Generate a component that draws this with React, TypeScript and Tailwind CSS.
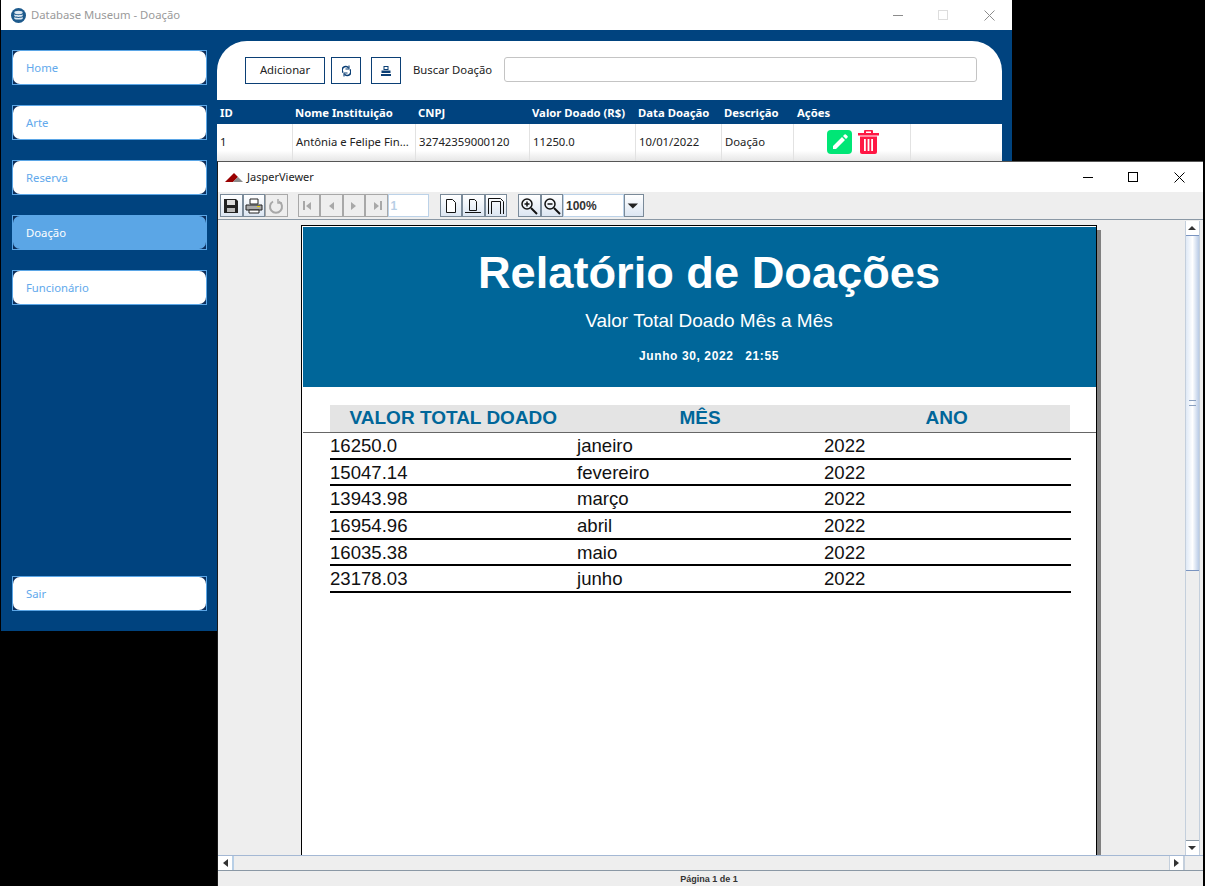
const NAV = ["Home", "Arte", "Reserva", "Doação", "Funcionário"];

const COLUMNS = [
  { label: "ID", value: "1", w: "w-[76px]" },
  { label: "Nome Instituição", value: "Antônia e Felipe Fin...", w: "w-[123px]" },
  { label: "CNPJ", value: "32742359000120", w: "w-[114px]" },
  { label: "Valor Doado (R$)", value: "11250.0", w: "w-[106px]" },
  { label: "Data Doação", value: "10/01/2022", w: "w-[86px]" },
  { label: "Descrição", value: "Doação", w: "w-[72px]" },
];

const ROWS = [
  ["16250.0", "janeiro", "2022"],
  ["15047.14", "fevereiro", "2022"],
  ["13943.98", "março", "2022"],
  ["16954.96", "abril", "2022"],
  ["16035.38", "maio", "2022"],
  ["23178.03", "junho", "2022"],
];

function NavButton({ label, active }: { label: string; active?: boolean }) {
  return (
    <div className="h-[35px] w-[195px] border border-[#5ba6e6] bg-[#0d2f5c]">
      <div
        className={`flex h-full items-center rounded-[7px] pl-[13px] pt-[1px] text-[11.300px] ${
          active ? "bg-[#5ba6e6] text-white" : "bg-white text-[#62a9ec]"
        }`}
      >
        {label}
      </div>
    </div>
  );
}

function ToolButton({ children, off }: { children: React.ReactNode; off?: boolean }) {
  return (
    <div
      className={`flex h-[23px] w-[22.500px] shrink-0 items-center justify-center border bg-gradient-to-b ${
        off ? "border-[#a8a8a8] from-[#eeeeee] to-[#eeeeee]" : "border-[#7a8a99] from-white to-[#dce6f2]"
      }`}
    >
      {children}
    </div>
  );
}

function Tri({ dir, className }: { dir: "l" | "r" | "u" | "d"; className: string }) {
  const pts = { l: "8,1 8,9 3,5", r: "3,1 3,9 8,5", u: "1,7 9,7 5,3", d: "1,3 9,3 5,7" }[dir];
  return (
    <svg width="11" height="10" viewBox="0 0 11 10" className={className}>
      <polygon points={pts} fill="currentColor" />
    </svg>
  );
}

// window buttons, drawn so the three glyphs keep the native 10px box
function WinControls({ minGap, maxGap, right, maxClass, className }: {
  minGap: string;
  maxGap: string;
  right: string;
  maxClass: string;
  className: string;
}) {
  return (
    <div className={`ml-auto flex items-center ${right} ${className}`}>
      <svg width="10" height="10" viewBox="0 0 10 10" stroke="currentColor" className={minGap}>
        <path d="M0 5.500h10" />
      </svg>
      <svg width="10" height="10" viewBox="0 0 10 10" fill="none" stroke="currentColor" className={`${maxGap} ${maxClass}`}>
        <rect x="0.500" y="0.500" width="9" height="9" />
      </svg>
      <svg width="11" height="11" viewBox="0 0 11 11" stroke="currentColor">
        <path d="M0.500 0.500l10 10M10.500 0.500l-10 10" />
      </svg>
    </div>
  );
}

export default function App() {
  return (
    <div className="relative h-[886px] w-[1205px] overflow-hidden bg-black font-['Noto_Sans',sans-serif]">
      {/* main window */}
      <div className="ml-px flex h-[631px] w-[1011px] flex-col bg-[#00437f]">
        <div className="flex h-[30px] shrink-0 items-center bg-white pl-[10px] text-[11.300px] text-[#9a9a9a]">
          <svg width="15" height="15" viewBox="0 0 15 15" className="mr-[5px]">
            <circle cx="7.500" cy="7.500" r="7.500" fill="#1d5a8c" />
            <ellipse cx="7.500" cy="4.500" rx="4.200" ry="1.800" fill="#dfe9f2" />
            <path d="M3.300 6.300c1.500 1.200 6.900 1.200 8.400 0v1.700c-1.500 1.200-6.900 1.200-8.400 0z" fill="#dfe9f2" />
            <path d="M3.300 9c1.500 1.200 6.900 1.200 8.400 0v1.700c-1.500 1.200-6.900 1.200-8.400 0z" fill="#dfe9f2" />
          </svg>
          <span>Database Museum - Doação</span>
          <WinControls
            minGap="mr-[35px]"
            maxGap="mr-[36px]"
            right="mr-[17px]"
            maxClass="text-[#dddddd]"
            className="text-[#8c8c8c]"
          />
        </div>

        <div className="flex flex-1">
          <div className="flex w-[216px] shrink-0 flex-col gap-[20px] pb-[20px] pl-[11px] pt-[20px]">
            {NAV.map((n) => (
              <NavButton key={n} label={n} active={n === "Doação"} />
            ))}
            <div className="mt-auto">
              <NavButton label="Sair" />
            </div>
          </div>

          <div className="mt-[11px] h-[130px] w-[785px] rounded-t-[30px] bg-white">
            <div className="flex h-[59px] items-start pl-[28px] pt-[16px] text-[11.300px] text-[#222222]">
              <div className="flex h-[27px] w-[80px] items-center justify-center border border-[#0b3f75]">
                Adicionar
              </div>
              <div className="ml-[6px] flex h-[27px] w-[30px] items-center justify-center border border-[#0b3f75]">
                <svg width="9" height="12" viewBox="0 0 9 12" fill="none" stroke="#0b3f75" strokeWidth="1.600">
                  <path d="M1 7.500A3.500 3.500 0 0 1 6.500 2.800M8 4.500a3.500 3.500 0 0 1-5.500 4.700" />
                  <path d="M7 .5v3.500H3.500M2 11.500V8h3.500" strokeWidth="1.100" />
                </svg>
              </div>
              <div className="ml-[10px] flex h-[27px] w-[30px] items-center justify-center border border-[#0b3f75]">
                <svg width="10" height="10" viewBox="0 0 10 10" fill="#0b3f75">
                  <path d="M2.500 0h5v4h-5zM3.500 1v2h3V1z" fillRule="evenodd" />
                  <rect x="0.500" y="4.500" width="9" height="2.500" />
                  <rect x="0" y="8" width="10" height="2" />
                </svg>
              </div>
              <span className="ml-[12px] mt-[5px] w-[91px]">Buscar Doação</span>
              <div className="h-[25px] w-[473px] rounded-[3px] border border-[#c4c4c4] bg-white" />
            </div>
            <div className="flex h-[24px] bg-[#00437f] text-[11.300px] font-bold leading-[26px] text-white">
              {COLUMNS.map((c) => (
                <div key={c.label} className={`${c.w} whitespace-nowrap pl-[2px] first:pl-[3px]`}>
                  {c.label}
                </div>
              ))}
              <div className="pl-[3px]">Ações</div>
            </div>
            <div className="flex h-[38px] bg-gradient-to-b from-white from-70% to-[#e4e4e4] text-[11.300px] leading-[36px] text-[#222222]">
              {COLUMNS.map((c) => (
                <div key={c.label} className={`${c.w} whitespace-nowrap border-r border-[#e2e2e2] pl-[3px]`}>
                  {c.value}
                </div>
              ))}
              <div className="flex w-[117px] items-start gap-[6px] border-r border-[#e2e2e2] pl-[33px] pt-[6px]">
                <div className="flex h-[24px] w-[25px] items-center justify-center rounded-[4px] bg-[#00e676]">
                  <svg width="18" height="18" viewBox="0 0 18 18" fill="white">
                    <path d="M2 13l9-9 3 3-9 9H2zM12 3l1.500-1.500a1 1 0 0 1 1.400 0l1.600 1.600a1 1 0 0 1 0 1.400L15 6z" />
                  </svg>
                </div>
                <svg width="21" height="24" viewBox="0 0 21 24" fill="#ff1744">
                  <path d="M7 0h7a1 1 0 0 1 1 1v2h6v2.500H0V3h6V1a1 1 0 0 1 1-1zm1 1.500V3h5V1.500z" fillRule="evenodd" />
                  <path d="M2 6.500h17V22a2 2 0 0 1-2 2H4a2 2 0 0 1-2-2z" />
                  <rect x="6" y="9" width="1.800" height="12" fill="white" />
                  <rect x="9.600" y="9" width="1.800" height="12" fill="white" />
                  <rect x="13.200" y="9" width="1.800" height="12" fill="white" />
                </svg>
              </div>
            </div>
          </div>
        </div>
      </div>

      {/* report viewer window */}
      <div className="absolute left-[217px] top-[161px] flex h-[725px] w-[986px] flex-col border-l border-t border-l-[#1a1a1a] border-t-[#555555] bg-[#eeeeee] font-['Liberation_Sans',sans-serif]">
        <div className="flex h-[30px] shrink-0 items-center bg-white pl-[7px] font-['Noto_Sans',sans-serif] text-[11px] text-[#222222]">
          <svg width="18" height="9" viewBox="0 0 18 9" className="mr-[4px]">
            <polygon points="0,9 9,0 13,4 8,9" fill="#990000" />
            <polygon points="8,9 13,4 18,9" fill="#8c8c8c" />
          </svg>
          <span>JasperViewer</span>
          <WinControls
            minGap="mr-[35px]"
            maxGap="mr-[36px]"
            right="mr-[18px]"
            maxClass=""
            className="text-black"
          />
        </div>

        <div className="flex h-[28px] shrink-0 items-start border-b-[1.500px] border-[#8a98a5] pl-[2px] pt-[2px]">
          <ToolButton>
            <svg width="16" height="16" viewBox="0 0 16 16">
              <path d="M1 1h12l2 2v12H1z" fill="#222222" />
              <rect x="4" y="2" width="8" height="5" fill="#dddddd" />
              <rect x="4" y="10" width="8" height="4" fill="#bbbbbb" />
            </svg>
          </ToolButton>
          <ToolButton>
            <svg width="18" height="16" viewBox="0 0 18 16">
              <path d="M5 1h8v5H5z" fill="#fff" stroke="#222" />
              <path d="M1 7h16v5H1z" fill="#aaa" stroke="#222" />
              <path d="M4 12h10v3H4z" fill="#fff" stroke="#222" />
              <rect x="12" y="8" width="3" height="1" fill="#e6d000" />
            </svg>
          </ToolButton>
          <ToolButton off>
            <svg width="16" height="16" viewBox="0 0 16 16" fill="none" stroke="#a8a8a8" strokeWidth="2">
              <path d="M5 3.500a6 6 0 1 0 6 0" />
              <path d="M10 1v4h4" strokeWidth="1.500" />
            </svg>
          </ToolButton>
          <div className="w-[10px] shrink-0" />
          <ToolButton off>
            <span className="flex items-center text-[#a8a8a8]">
              <span className="h-[9px] w-[2px] bg-[#a8a8a8]" />
              <Tri dir="l" className="-ml-[2px]" />
            </span>
          </ToolButton>
          <ToolButton off>
            <Tri dir="l" className="text-[#a8a8a8]" />
          </ToolButton>
          <ToolButton off>
            <Tri dir="r" className="text-[#a8a8a8]" />
          </ToolButton>
          <ToolButton off>
            <span className="flex items-center text-[#a8a8a8]">
              <Tri dir="r" className="-mr-[2px]" />
              <span className="h-[9px] w-[2px] bg-[#a8a8a8]" />
            </span>
          </ToolButton>
          <div className="flex h-[23px] w-[41px] shrink-0 items-center border border-[#bcd2e8] bg-white pl-[2px] text-[12px] font-bold text-[#b8cfe6]">
            1
          </div>
          <div className="w-[11px] shrink-0" />
          <ToolButton>
            <svg width="12" height="14" viewBox="0 0 12 14" fill="#fff" stroke="#111">
              <path d="M1.500.500h6l3 3v10h-9z" />
            </svg>
          </ToolButton>
          <ToolButton>
            <svg width="16" height="14" viewBox="0 0 16 14" fill="none" stroke="#111">
              <path d="M4.500.500h5l2 2v9h-7zM0 13.500h16" />
            </svg>
          </ToolButton>
          <ToolButton>
            <svg width="16" height="16" viewBox="0 0 16 16" fill="none" stroke="#111">
              <path d="M.500 16V.500h12l3 3V16M3.500 16V3.500h9V16" />
            </svg>
          </ToolButton>
          <div className="w-[11px] shrink-0" />
          <ToolButton>
            <svg width="18" height="18" viewBox="0 0 18 18" fill="none" stroke="#111">
              <circle cx="7" cy="7" r="5" strokeWidth="1.500" />
              <path d="M4.500 7h5M7 4.500v5" strokeWidth="1.500" />
              <path d="M11 11l6 6" strokeWidth="2" />
            </svg>
          </ToolButton>
          <ToolButton>
            <svg width="18" height="18" viewBox="0 0 18 18" fill="none" stroke="#111">
              <circle cx="7" cy="7" r="5" strokeWidth="1.500" />
              <path d="M4.500 7h5" strokeWidth="1.500" />
              <path d="M11 11l6 6" strokeWidth="2" />
            </svg>
          </ToolButton>
          <div className="flex h-[23px] w-[60.500px] shrink-0 items-center border border-[#bcd2e8] bg-white pl-[2px] text-[12px] font-bold text-[#333333]">
            100%
          </div>
          <div className="flex h-[23px] w-[20.500px] shrink-0 items-center justify-center border border-[#7a8a99] bg-gradient-to-b from-white to-[#dce6f2]">
            <Tri dir="d" className="scale-[1.300] text-[#222222]" />
          </div>
        </div>

        <div className="flex min-h-0 flex-1">
          {/* report page */}
          <div className="min-w-0 flex-1 pl-[83px] pt-[5px]">
            <div className="flex h-full w-[800px]">
              <div className="h-full w-[796px] border-x border-t border-black bg-white pl-[1px] pt-[1px]">
                <div className="flex h-[160px] flex-col items-center bg-[#006699] pl-[19px] text-white">
                  <div className="mt-[18px] text-[45.200px] font-bold leading-[56px]">Relatório de Doações</div>
                  <div className="mt-[8px] text-[19px] leading-[24px]">Valor Total Doado Mês a Mês</div>
                  <div className="mt-[15px] whitespace-pre text-[12px] font-bold leading-[16px] tracking-[0.600px]">
                    Junho 30, 2022   21:55
                  </div>
                </div>
                <div className="mt-[18px] border-b border-[#666666]">
                  <div className="ml-[27px] grid h-[27px] w-[740px] grid-cols-3 bg-[#e4e4e4] text-center text-[19px] font-bold leading-[26px] text-[#006699]">
                    <div>VALOR TOTAL DOADO</div>
                    <div>MÊS</div>
                    <div>ANO</div>
                  </div>
                </div>
                {ROWS.map((r) => (
                  <div
                    key={r[0]}
                    className="ml-[27px] grid h-[26.700px] w-[741px] grid-cols-3 border-b-2 border-black text-[18.600px] leading-[26px] text-[#111111]"
                  >
                    {r.map((v, i) => (
                      <div key={i}>{v}</div>
                    ))}
                  </div>
                ))}
              </div>
              <div className="mt-[5px] w-[4px] bg-[#808080]" />
            </div>
          </div>

          {/* vertical scrollbar */}
          <div className="mt-[1px] flex w-[15px] shrink-0 flex-col border-x border-[#c4cfdc] text-[#333333]">
            <div className="flex h-[15px] items-center justify-center border-b border-[#7a94c0] bg-white">
              <Tri dir="u" className="" />
            </div>
            <div className="relative h-[335px] border-b border-[#7a94c0] bg-gradient-to-r from-[#dfe9f6] via-white to-[#b9cbe6]">
              <div className="absolute left-[3px] top-[164px] h-[6px] w-[7px] border-y border-[#8aa0c0]" />
            </div>
            <div className="flex-1 bg-[#eeeeee]" />
            <div className="flex h-[15px] items-center justify-center border-t border-[#8a98a5] bg-white">
              <Tri dir="d" className="" />
            </div>
          </div>
          <div className="w-[3px] shrink-0" />
        </div>

        {/* horizontal scrollbar */}
        <div className="flex h-[16px] shrink-0 border-y border-y-[#a4b8d4] border-b-[#8a98a5] pr-[3px]">
          <div className="flex w-[16px] items-center justify-center border-r-2 border-[#b8cfe6] bg-white">
            <Tri dir="l" className="text-[#333333]" />
          </div>
          <div className="flex-1" />
          <div className="flex w-[15px] items-center justify-center border-x border-[#c4cfdc] bg-white">
            <Tri dir="r" className="text-[#333333]" />
          </div>
          <div className="w-[16px] border-l border-[#c4cfdc]" />
        </div>

        <div className="flex h-[15px] shrink-0 items-center justify-center pr-[3px] pt-[2px] text-[9px] font-bold text-[#333333]">
          Página 1 de 1
        </div>
      </div>
    </div>
  );
}
